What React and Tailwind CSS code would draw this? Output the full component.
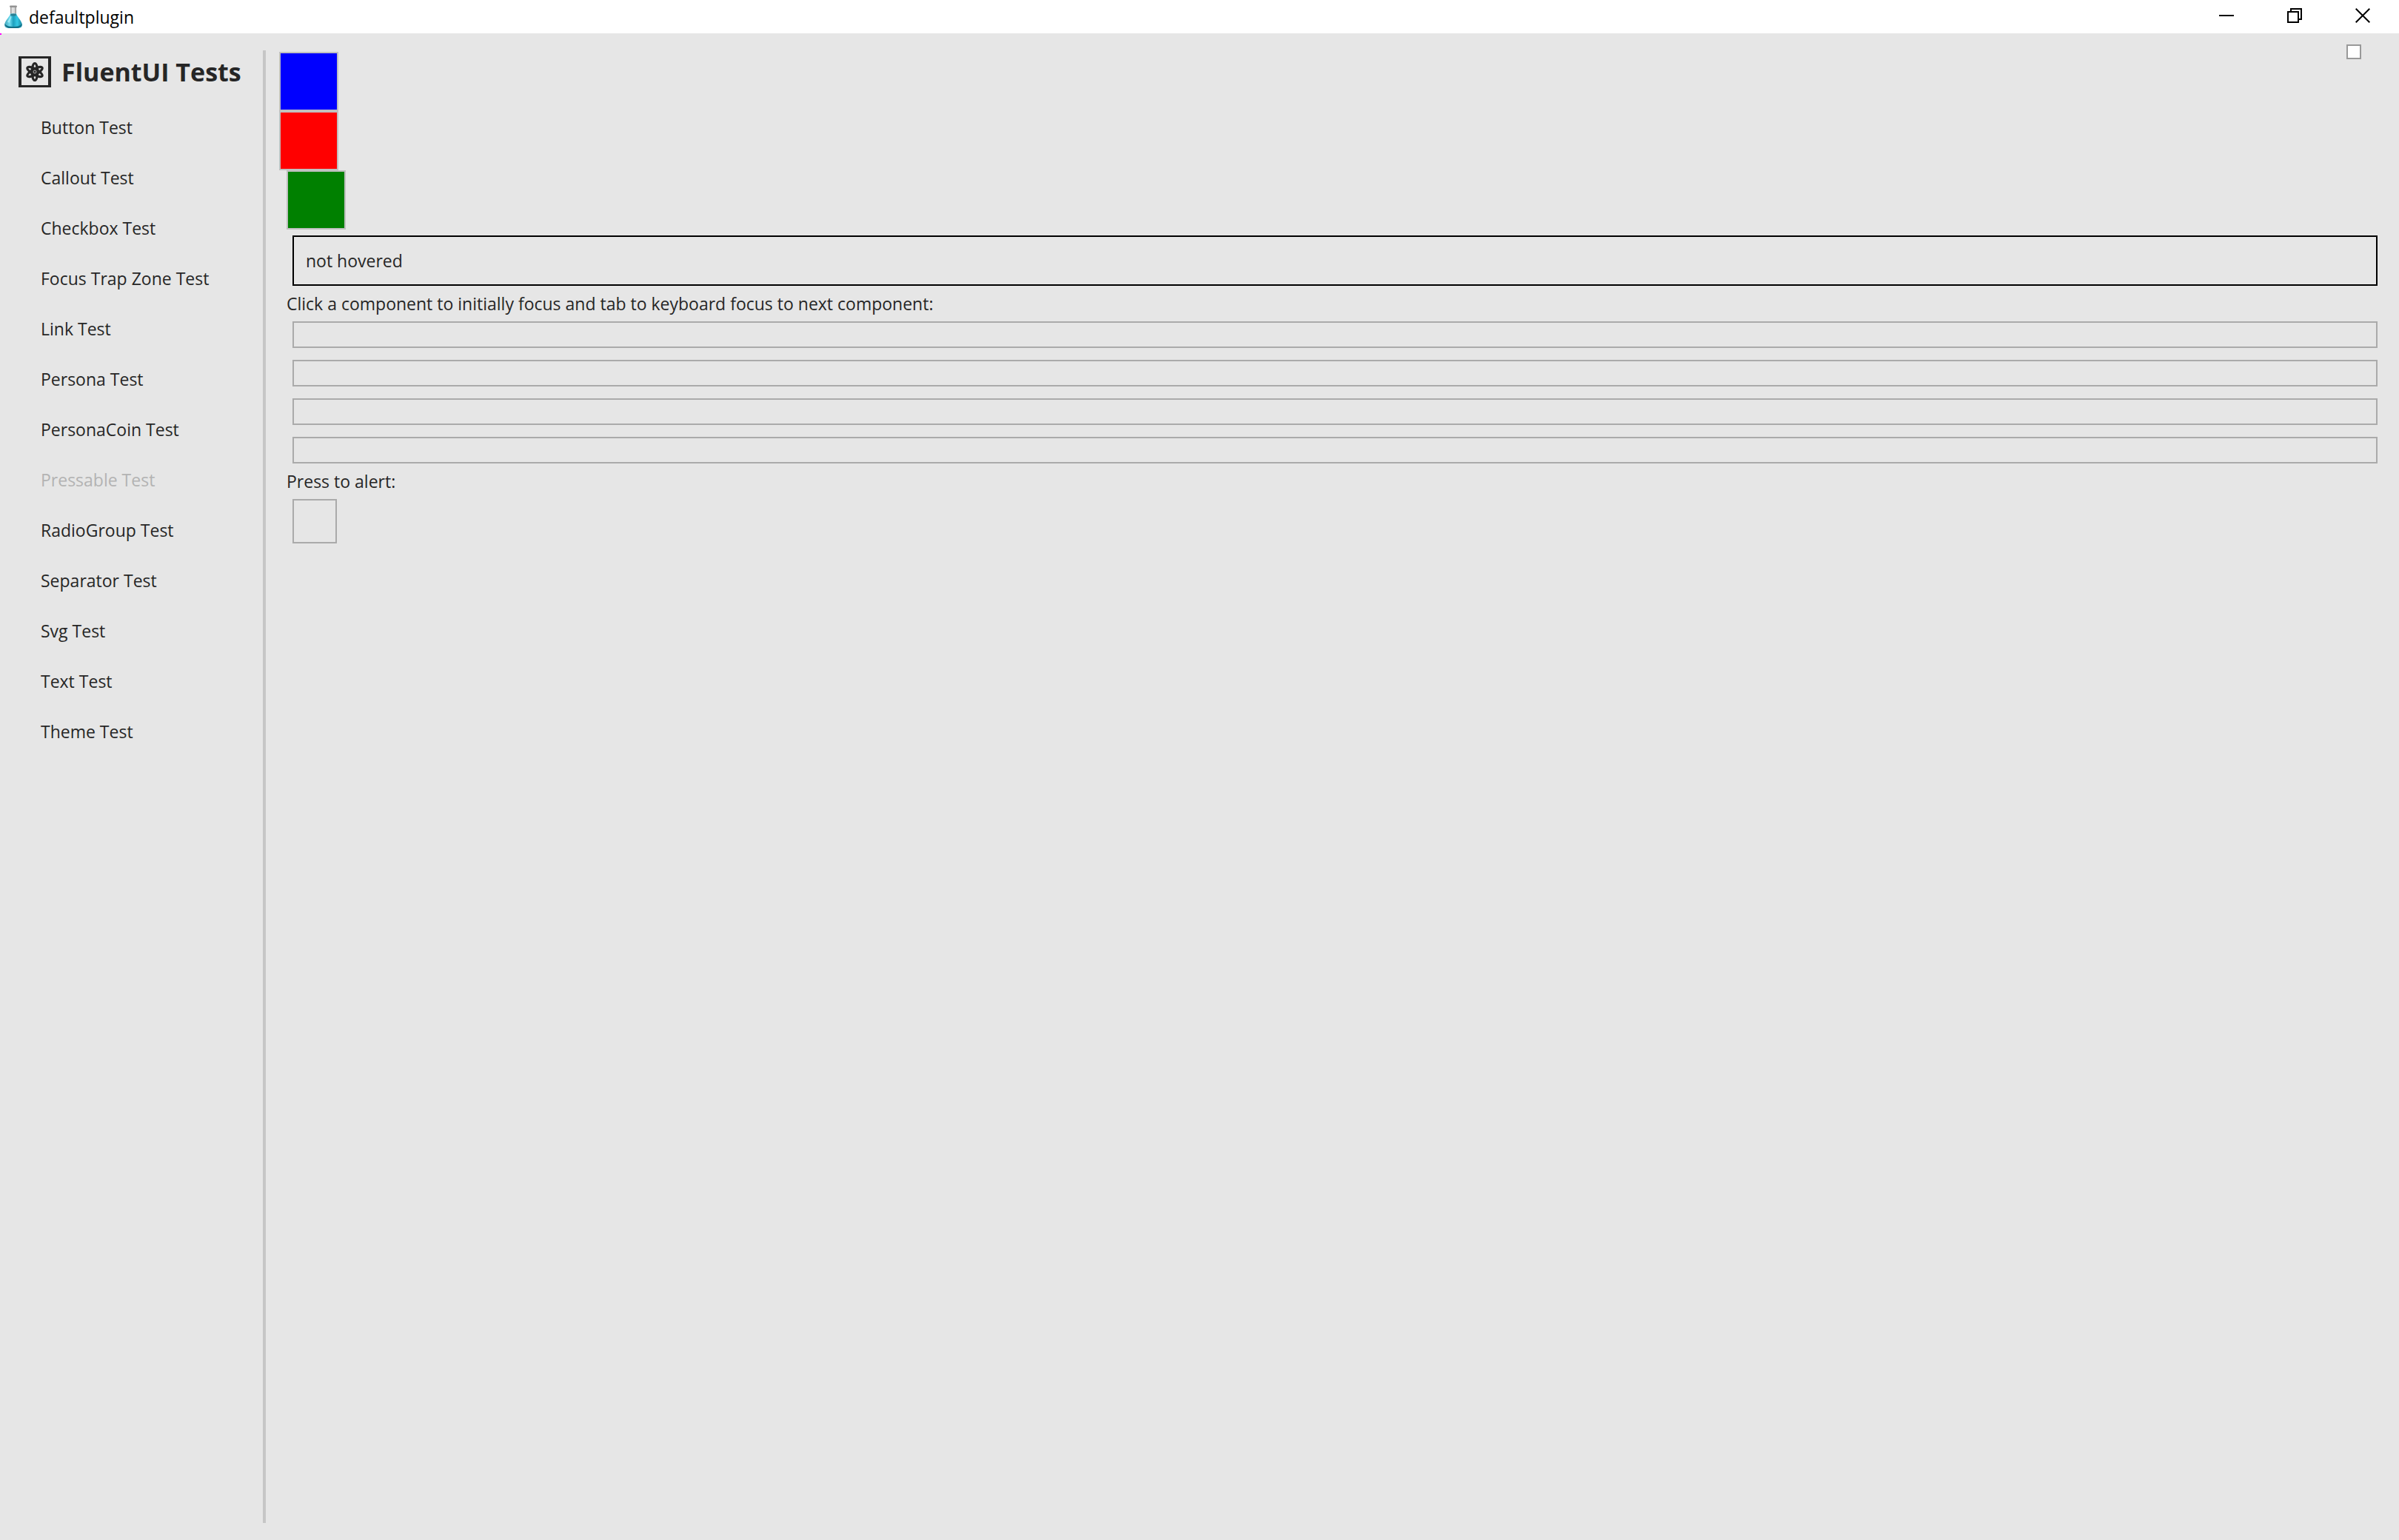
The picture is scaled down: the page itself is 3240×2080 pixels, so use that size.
const TESTS = [
  'Button Test',
  'Callout Test',
  'Checkbox Test',
  'Focus Trap Zone Test',
  'Link Test',
  'Persona Test',
  'PersonaCoin Test',
  'Pressable Test',
  'RadioGroup Test',
  'Separator Test',
  'Svg Test',
  'Text Test',
  'Theme Test',
];

function FlaskIcon() {
  return (
    <svg width="26" height="32" viewBox="0 0 26 32" aria-hidden="true">
      <defs>
        <linearGradient id="liquid" x1="0" y1="0" x2="1" y2="0">
          <stop offset="0" stopColor="#3fa3b8" />
          <stop offset="0.3" stopColor="#6fdcf0" />
          <stop offset="0.5" stopColor="#1d9fbd" />
          <stop offset="0.72" stopColor="#35c8e4" />
          <stop offset="1" stopColor="#1a87a0" />
        </linearGradient>
        <linearGradient id="glass" x1="0" y1="0" x2="1" y2="0">
          <stop offset="0" stopColor="#8f8f8f" />
          <stop offset="0.35" stopColor="#e8e8e8" />
          <stop offset="0.7" stopColor="#d0d0d0" />
          <stop offset="1" stopColor="#8a8a8a" />
        </linearGradient>
      </defs>
      <path d="M9 2h8v10H9z" fill="url(#glass)" />
      <path d="M9 11.500C8 15 3 20 1.500 24.500c-1.500 4.500 1.500 6.500 5.500 6.500h12c4 0 7-2 5.500-6.500C23 20 18 15 17 11.500z" fill="url(#liquid)" />
      <ellipse cx="13" cy="13" rx="4" ry="1.600" fill="#2b7f92" />
      <path d="M9.500 15L5 22.500l2.500 1.500 3-8z" fill="#b6f3fb" opacity="0.700" />
      <path d="M1.500 25c0 3.500 3 6 7 6h9c4 0 7-2.500 7-6-2 3-6 4-11.500 4S3.500 28 1.500 25z" fill="#136f86" />
      <rect x="8" y="0.500" width="10" height="2.500" rx="1.200" fill="#929292" />
    </svg>
  );
}

function AtomIcon() {
  return (
    <svg width="44" height="42" viewBox="0 0 44 42" aria-hidden="true">
      <rect x="0" y="0" width="44" height="42" fill="#262626" />
      <rect x="4" y="3" width="36" height="36" fill="#e6e6e6" />
      <g fill="none" stroke="#262626" strokeWidth="3.200">
        <ellipse cx="22" cy="21" rx="3.800" ry="11.500" />
        <ellipse cx="22" cy="21" rx="3.800" ry="11.500" transform="rotate(60 22 21)" />
        <ellipse cx="22" cy="21" rx="3.800" ry="11.500" transform="rotate(-60 22 21)" />
      </g>
      <circle cx="22" cy="21" r="3.500" fill="#262626" />
      <circle cx="22" cy="21" r="2" fill="none" stroke="#b0b0b0" strokeWidth="1" />
    </svg>
  );
}

function TitleBar() {
  const button = 'flex h-[42px] w-[92px] items-center justify-center';
  return (
    <header className="flex h-[45px] items-start bg-white pr-[3px] text-black">
      <div className="flex h-[45px] flex-1 items-center gap-2 pl-[5px]">
        <FlaskIcon />
        <span>defaultplugin</span>
      </div>
      <button className={button} aria-label="Minimize">
        <svg width="20" height="20" viewBox="0 0 20 20" fill="currentColor" shapeRendering="crispEdges">
          <rect x="0" y="9" width="20" height="2" />
        </svg>
      </button>
      <button className={button} aria-label="Restore">
        <svg width="20" height="20" viewBox="0 0 20 20" fill="none" stroke="currentColor" strokeWidth="2" shapeRendering="crispEdges">
          <path d="M1 5h14v14H1zM5 5V1h14v14h-4" />
        </svg>
      </button>
      <button className={button} aria-label="Close">
        <svg width="20" height="20" viewBox="0 0 20 20" fill="none" stroke="currentColor" strokeWidth="2">
          <path d="M0.700 0.700l18.600 18.600M19.300 0.700L0.700 19.300" />
        </svg>
      </button>
    </header>
  );
}

function Sidebar() {
  return (
    <nav className="w-[355px] shrink-0 pl-[25px]">
      <div className="mb-3 flex h-[58px] items-center gap-[14px]">
        <AtomIcon />
        <h1 className="text-[34px] leading-[48px] font-bold whitespace-nowrap">FluentUI Tests</h1>
      </div>
      {TESTS.map((name) => (
        <button
          key={name}
          disabled={name === 'Pressable Test'}
          className="flex h-[68px] w-full items-center pl-[30px] text-left disabled:text-[#b3b3b3]"
        >
          {name}
        </button>
      ))}
    </nav>
  );
}

function Pressables() {
  return (
    <main className="relative min-w-0 flex-1 pt-[2px] pr-[21px] pl-[18px]">
      <input
        type="checkbox"
        aria-label="Enabled"
        className="absolute -top-2 right-[51px] size-5 appearance-none border-2 border-[#999999] bg-white"
      />
      <button aria-label="Blue" className="block size-20 border-2 border-[#c0c0c0] bg-[#0000ff]" />
      <button aria-label="Red" className="block size-20 border-2 border-[#c0c0c0] bg-[#ff0000]" />
      <div className="pl-[10px]">
        <button aria-label="Green" className="block size-20 border-2 border-[#c0c0c0] bg-[#008000]" />
        <div className="m-2 border-2 border-black p-4">not hovered</div>
        <p>Click a component to initially focus and tab to keyboard focus to next component:</p>
        <div className="flex flex-col gap-4 p-2">
          {[1, 2, 3, 4].map((n) => (
            <button key={n} aria-label={`Focusable ${n}`} className="h-9 border-2 border-[#aaaaaa]" />
          ))}
        </div>
        <p>Press to alert:</p>
        <button aria-label="Alert" className="m-2 block size-[60px] border-2 border-[#aaaaaa]" />
      </div>
    </main>
  );
}

export default function App() {
  return (
    <div className="flex min-h-screen flex-col bg-[#e6e6e6] font-['Open_Sans','Noto_Sans',sans-serif] text-[23px] leading-8 text-[#262626]">
      <TitleBar />
      <div className="relative flex flex-1 py-[23px]">
        <span className="absolute top-0 left-0 size-[2px] bg-[#ff00ff]" />
        <Sidebar />
        <div className="w-1 shrink-0 bg-[#c6c6c6]" />
        <Pressables />
      </div>
    </div>
  );
}
